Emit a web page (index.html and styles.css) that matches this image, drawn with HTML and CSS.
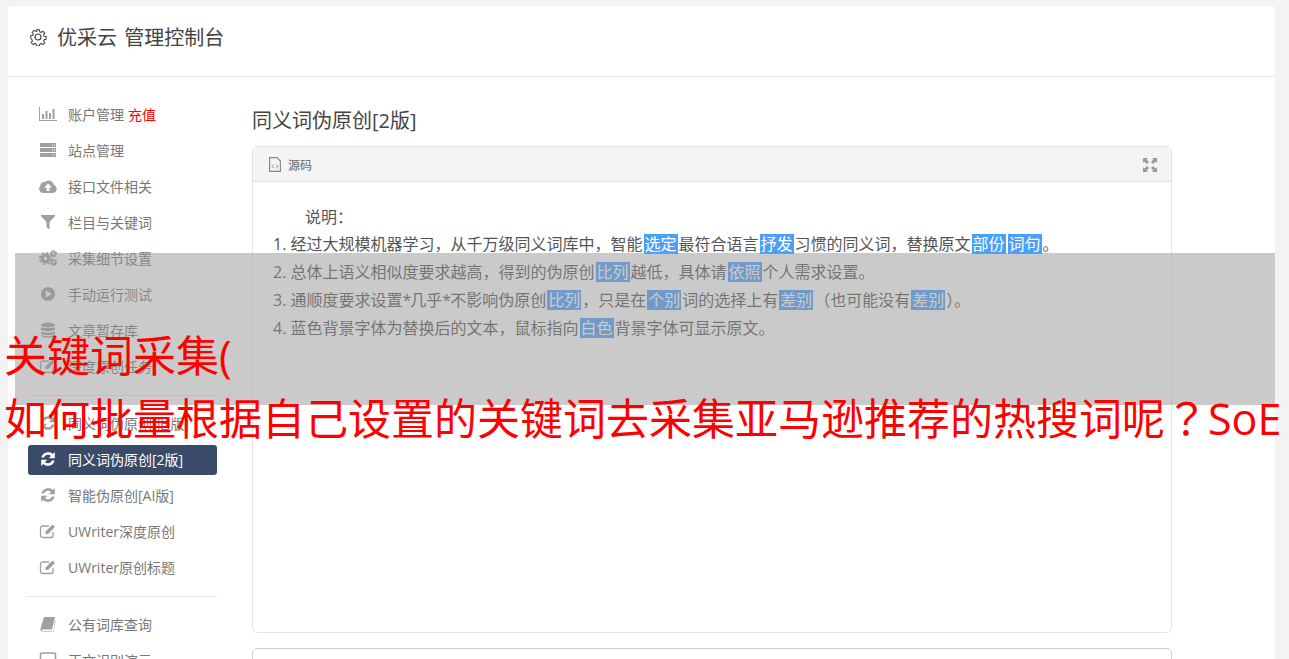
FILE: index.html
```html
<!DOCTYPE html>
<html lang="en">
<head>
    <meta charset="UTF-8">
    <meta name="viewport" content="width=device-width, initial-scale=1.0">
    <title>优采云 管理控制台</title>
    <link rel="stylesheet" href="styles.css">
</head>
<body>
    <svg class="icon-defs" width="0" height="0">
        <symbol id="i-chart" viewBox="0 0 18 16"><path d="M0 1h1v13h17v1H0z"/><path d="M3 8h2v5H3zM6.500 5h2v8h-2zM10 7h2v6h-2zM13.500 3h2v10h-2z"/></symbol>
        <symbol id="i-server" viewBox="0 0 18 16"><path fill-rule="evenodd" d="M1 1h16v4H1zM13 2.500v1h1v-1zM15 2.500v1h1v-1zM1 6h16v4H1zM13 7.500v1h1v-1zM15 7.500v1h1v-1zM1 11h16v4H1zM13 12.500v1h1v-1zM15 12.500v1h1v-1z"/></symbol>
        <symbol id="i-cloud" viewBox="0 0 18 16"><path fill-rule="evenodd" d="M4 15A4 4 0 0 1 1.500 8 3.200 3.200 0 0 1 5.700 4.300 5.500 5.500 0 0 1 15 6.900 4.200 4.200 0 0 1 14 15zM9 5.500L5 9.500h2.500V13h3V9.500H13z"/></symbol>
        <symbol id="i-filter" viewBox="0 0 18 16"><path d="M2 1h14v1L10.500 8v7.500l-3-2.500V8L2 2z"/></symbol>
        <symbol id="i-cogs" viewBox="0 0 18 16"><circle cx="6.500" cy="8.500" r="3.300" fill="none" stroke="currentColor" stroke-width="3"/><circle cx="6.500" cy="8.500" r="5.700" fill="none" stroke="currentColor" stroke-width="1.800" stroke-dasharray="2.200 2.270"/><circle cx="14.500" cy="3.800" r="1.900" fill="none" stroke="currentColor" stroke-width="1.600"/><circle cx="14.500" cy="3.800" r="3.200" fill="none" stroke="currentColor" stroke-width="1.200" stroke-dasharray="1.300 1.210"/><circle cx="14.500" cy="12.200" r="1.900" fill="none" stroke="currentColor" stroke-width="1.600"/><circle cx="14.500" cy="12.200" r="3.200" fill="none" stroke="currentColor" stroke-width="1.200" stroke-dasharray="1.300 1.210"/></symbol>
        <symbol id="i-play" viewBox="0 0 18 16"><path fill-rule="evenodd" d="M9 1a7 7 0 1 0 0 14A7 7 0 0 0 9 1zM6.800 4.600L12.800 8l-6 3.400z"/></symbol>
        <symbol id="i-database" viewBox="0 0 18 16"><ellipse cx="9" cy="3" rx="7" ry="2.600"/><path d="M2 4.700C3 6.500 15 6.500 16 4.700V7.500C15 9.800 3 9.800 2 7.500zM2 9C3 11 15 11 16 9v2.500C15 13.800 3 13.800 2 11.500zM2 12.600C3 14.700 15 14.700 16 12.600v.8C15 16.400 3 16.400 2 13.400z"/></symbol>
        <symbol id="i-edit" viewBox="0 0 18 16"><path d="M14 9v3.500a2 2 0 0 1-2 2H3.500a2 2 0 0 1-2-2V5a2 2 0 0 1 2-2H10" fill="none" stroke="currentColor" stroke-width="1.300"/><path d="M6.500 8.500L13.500 1.500l2.500 2.500-7 7H6.500z"/></symbol>
        <symbol id="i-refresh" viewBox="0 0 18 16"><path d="M2.400 6.500A6.900 6.900 0 0 1 13.800 3L15.800 1V7.200H9.700L12 4.900A4.300 4.300 0 0 0 5 6.500zM15.600 9.500A6.900 6.900 0 0 1 4.200 13L2.200 15V8.800H8.300L6 11.100A4.300 4.300 0 0 0 13 9.500z"/></symbol>
        <symbol id="i-book" viewBox="0 0 18 16"><path d="M5 1h11l-.3 1L13 13.500H3.700c-.8 0-1 .5-.8 1 .1.400.5.500 1 .5H14l.6-.5 1.300-10.500.6.500-1.800 11H3.500C2 15.500 1 14 1.500 12.500z"/></symbol>
        <symbol id="i-screen" viewBox="0 0 18 16"><rect x="1.500" y="1" width="15" height="11" rx="1.500" fill="none" stroke="currentColor" stroke-width="1.600"/><path d="M6 14h6v1.500H6z"/></symbol>
        <symbol id="i-gear" viewBox="0 0 18 18"><path fill="none" stroke="currentColor" stroke-width="1.200" d="M7.500 1h3l.5 2.300 1.400.6 2-1.300 2.100 2.100-1.300 2 .6 1.400 2.200.4v3l-2.200.5-.6 1.400 1.300 2-2.100 2.100-2-1.300-1.400.6-.5 2.200h-3l-.5-2.200-1.400-.6-2 1.300-2.100-2.100 1.300-2-.6-1.400L1 10.500v-3l2.200-.4.600-1.400-1.300-2L4.600 1.600l2 1.300 1.400-.6z" transform="translate(.9 .9) scale(.9)"/><circle cx="9" cy="9" r="3" fill="none" stroke="currentColor" stroke-width="1.200"/></symbol>
        <symbol id="i-source" viewBox="0 0 12 15"><path fill="none" stroke="currentColor" stroke-width="1.200" d="M.6 .6h7.400L11.400 4v10.400H.6z"/><path fill="none" stroke="currentColor" d="M4.800 7.500L3 9.300l1.800 1.800M7.200 7.500L9 9.300l-1.800 1.800"/></symbol>
        <symbol id="i-expand" viewBox="0 0 14 14"><path d="M0 0h5L3.500 1.500 6 4 4 6 1.500 3.500 0 5zM14 0v5l-1.500-1.500L10 6 8 4l2.500-2.500L9 0zM0 14V9l1.500 1.500L4 8l2 2-2.500 2.500L5 14zM14 14H9l1.500-1.500L8 10l2-2 2.500 2.500L14 9z"/></symbol>
    </svg>

    <div class="console">
        <div class="console-head">
            <svg class="head-icon"><use href="#i-gear"/></svg>
            <h1>优采云 管理控制台</h1>
        </div>
        <div class="console-body">
            <!-- Sidebar -->
            <div class="sidebar">
                <a class="nav-item"><svg class="nav-icon"><use href="#i-chart"/></svg><span>账户管理</span><span class="recharge">充值</span></a>
                <a class="nav-item"><svg class="nav-icon"><use href="#i-server"/></svg><span>站点管理</span></a>
                <a class="nav-item"><svg class="nav-icon"><use href="#i-cloud"/></svg><span>接口文件相关</span></a>
                <a class="nav-item"><svg class="nav-icon"><use href="#i-filter"/></svg><span>栏目与关键词</span></a>
                <a class="nav-item"><svg class="nav-icon"><use href="#i-cogs"/></svg><span>采集细节设置</span></a>
                <a class="nav-item"><svg class="nav-icon"><use href="#i-play"/></svg><span>手动运行测试</span></a>
                <a class="nav-item"><svg class="nav-icon"><use href="#i-database"/></svg><span>文章暂存库</span></a>
                <a class="nav-item"><svg class="nav-icon"><use href="#i-edit"/></svg><span>深度原创任务</span></a>
                <div class="nav-divider"></div>
                <a class="nav-item"><svg class="nav-icon"><use href="#i-refresh"/></svg><span>同义词伪原创[旧版]</span></a>
                <a class="nav-item active"><svg class="nav-icon"><use href="#i-refresh"/></svg><span>同义词伪原创[2版]</span></a>
                <a class="nav-item"><svg class="nav-icon"><use href="#i-refresh"/></svg><span>智能伪原创[AI版]</span></a>
                <a class="nav-item"><svg class="nav-icon"><use href="#i-edit"/></svg><span>UWriter深度原创</span></a>
                <a class="nav-item"><svg class="nav-icon"><use href="#i-edit"/></svg><span>UWriter原创标题</span></a>
                <div class="nav-divider"></div>
                <a class="nav-item"><svg class="nav-icon"><use href="#i-book"/></svg><span>公有词库查询</span></a>
                <a class="nav-item"><svg class="nav-icon"><use href="#i-screen"/></svg><span>正文识别演示</span></a>
            </div>

            <!-- Main section -->
            <div class="main">
                <h2>同义词伪原创[2版]</h2>
                <div class="panel">
                    <div class="panel-head">
                        <span class="panel-title"><svg class="source-icon"><use href="#i-source"/></svg>源码</span>
                        <svg class="expand-icon"><use href="#i-expand"/></svg>
                    </div>
                    <div class="panel-body">
                        <p class="intro">说明：</p>
                        <p>1. 经过大规模机器学习，从千万级同义词库中，智能<span class="hl">选定</span>最符合语言<span class="hl">抒发</span>习惯的同义词，替换原文<span class="hl">部份</span><span class="hl">词句</span>。</p>
                        <p>2. 总体上语义相似度要求越高，得到的伪原创<span class="hl">比列</span>越低，具体请<span class="hl">依照</span>个人需求设置。</p>
                        <p>3. 通顺度要求设置<span class="star">*</span>几乎<span class="star">*</span>不影响伪原创<span class="hl">比列</span>，只是在<span class="hl">个别</span>词的选择上有<span class="hl">差别</span>（也可能没有<span class="hl">差别</span>）。</p>
                        <p>4. 蓝色背景字体为替换后的文本，鼠标指向<span class="hl">白色</span>背景字体可显示原文。</p>
                    </div>
                </div>
                <div class="panel panel-next"></div>
            </div>
        </div>
    </div>

    <!-- Banner over the page -->
    <div class="banner"></div>
    <div class="headline">关键词采集(<br>如何批量根据自己设置的关键词去采集亚马逊推荐的热搜词呢<span class="mark">？</span>SoE</div>
</body>
</html>
```

FILE: styles.css
```css
html, body {
    height: 100%;
}
body {
    margin: 0;
    height: 100vh;
    overflow: hidden;
    background-color: #f3f3f4;
    color: #676a6c;
    font-family: "Open Sans", "Noto Sans CJK SC", sans-serif;
    font-size: 14px;
}
.icon-defs {
    position: absolute;
}
.console {
    margin: 6px 14px 0 8px;
    background-color: white;
    border-radius: 4px 4px 0 0;
}
.console-head {
    display: flex;
    align-items: center;
    box-sizing: border-box;
    height: 71px;
    padding: 0 0 9px 21px;
    border-bottom: 1px solid #e7eaec;
}
.head-icon {
    width: 18px;
    height: 18px;
    margin-right: 10px;
    color: #444;
}
.console-head h1 {
    margin: 0;
    font-size: 20px;
    word-spacing: 2px;
    font-weight: normal;
    color: #444;
}
.console-body {
    display: flex;
}
.sidebar {
    display: flex;
    flex-direction: column;
    gap: 6px;
    flex: none;
    box-sizing: border-box;
    width: 224px;
    padding: 23px 0 0 20px;
    margin-right: 20px;
}
.sidebar .nav-item,
.sidebar .nav-divider {
    width: 189px;
}
.nav-item {
    display: flex;
    align-items: center;
    flex: none;
    height: 30px;
    box-sizing: border-box;
    padding: 0 0 2px 11px;
    border-radius: 3px;
    color: #777;
    font-size: 14px;
}
.nav-icon {
    flex: none;
    width: 18px;
    height: 16px;
    margin-right: 11px;
    color: #a0a0a0;
    fill: currentColor;
}
.nav-item.active {
    background-color: #3a4b69;
    color: white;
}
.nav-item.active .nav-icon {
    color: white;
}
.recharge {
    margin-left: 4px;
    color: red;
}
.nav-divider {
    flex: none;
    height: 1px;
    margin: 7px 0;
    background-color: #e7e7e7;
}
.main {
    width: 920px;
    padding-top: 23px;
}
.main h2 {
    margin: 0 0 4px;
    height: 42px;
    line-height: 42px;
    font-size: 20px;
    font-weight: normal;
    color: #444;
}
.panel {
    box-sizing: border-box;
    height: 487px;
    border: 1px solid #e4e4e4;
    border-radius: 5px;
    overflow: hidden;
}
.panel-next {
    margin-top: 15px;
    border-color: #ccc;
}
.panel-head {
    display: flex;
    align-items: center;
    justify-content: space-between;
    box-sizing: border-box;
    height: 35px;
    padding: 1px 14px 0 16px;
    background-color: #f4f4f4;
    border-bottom: 1px solid #e4e4e4;
    font-size: 12px;
}
.panel-title {
    display: flex;
    align-items: center;
    color: #666;
}
.source-icon {
    width: 12px;
    height: 15px;
    margin-right: 7px;
    color: #888;
}
.expand-icon {
    width: 14px;
    height: 14px;
    fill: #999;
}
.panel-body {
    padding: 20px 20px;
    font-size: 16px;
    line-height: 28px;
    color: #555;
}
.panel-body p {
    margin: 0;
}
.panel-body .intro {
    padding: 1px 0 0 32px;
    margin-bottom: -1px;
}
.star {
    letter-spacing: -1px;
}
.hl {
    display: inline-block;
    height: 20px;
    line-height: 20px;
    padding: 0 1px;
    margin: 0 1px;
    background-color: #4a9ff9;
    color: white;
}
.banner {
    position: absolute;
    left: 15px;
    top: 253px;
    width: 1260px;
    height: 152px;
    background-color: rgba(150, 150, 150, 0.5);
}
.headline {
    position: absolute;
    left: 4px;
    top: 326px;
    white-space: nowrap;
    font-size: 43px;
    line-height: 60px;
    color: red;
}
.mark {
    font-family: "Noto Sans CJK TC", sans-serif;
}
```
